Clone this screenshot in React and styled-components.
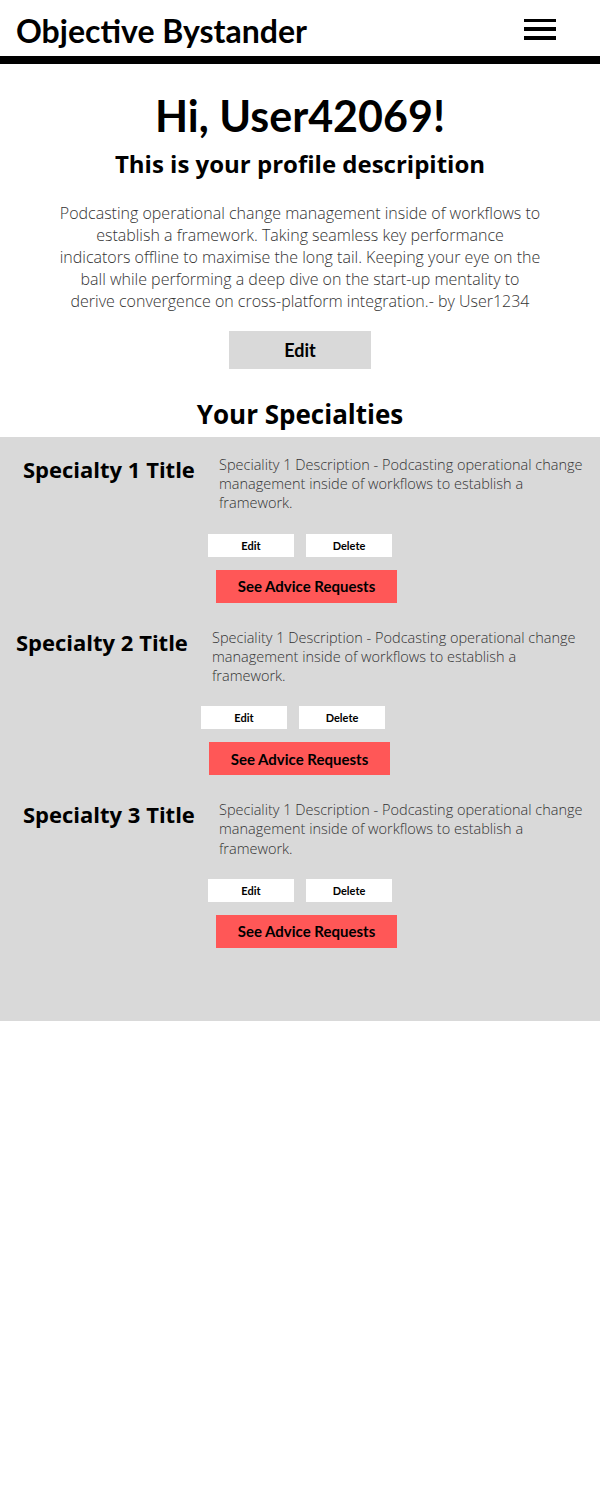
import React from "react";
import styled, { createGlobalStyle } from "styled-components";

const GlobalStyle = createGlobalStyle`
  html, body { margin: 0; padding: 0; background: #ffffff; }
  body { font-family: "Open Sans", "Liberation Sans", sans-serif; color: #000; }
  * { box-sizing: border-box; }
`;

const Page = styled.div`
  width: 600px;
  display: flex;
  flex-direction: column;
`;

const Header = styled.header`
  height: 56px;
  display: flex;
  align-items: center;
  justify-content: space-between;
  padding: 0 44px 0 16px;
`;

const Brand = styled.h1`
  margin: 4px 0 0 0;
  font-family: Lato, "Liberation Sans", sans-serif;
  font-weight: 700;
  font-size: 32px;
  line-height: normal;
`;

const MenuButton = styled.button`
  border: 0;
  padding: 0;
  background: transparent;
  width: 32px;
  height: 21px;
  margin-top: 2px;
  display: flex;
  flex-direction: column;
  justify-content: space-between;
`;

const MenuLine = styled.span`
  display: block;
  width: 32px;
  height: 3.5px;
  background: #000;
`;

const Rule = styled.div`
  height: 8px;
  background: #000;
`;

const Profile = styled.section`
  display: flex;
  flex-direction: column;
  align-items: center;
  text-align: center;
`;

const Greeting = styled.h2`
  margin: 26px 0 0 0;
  font-family: Lato, "Liberation Sans", sans-serif;
  font-weight: 700;
  font-size: 43px;
  line-height: normal;
`;

const Subheading = styled.h3`
  margin: ${(p) => p.$mt || 0}px 0 0 0;
  font-family: "Open Sans", "Liberation Sans", sans-serif;
  font-weight: 700;
  font-size: ${(p) => p.$size}px;
  line-height: normal;
`;

const Bio = styled.p`
  margin: 22px 0 0 0;
  width: 481px;
  font-family: "Open Sans", "Liberation Sans", sans-serif;
  font-weight: 300;
  font-size: 16px;
  line-height: normal;
  color: #333;
`;

const ProfileEdit = styled.button`
  margin-top: 19px;
  width: 142px;
  height: 38px;
  border: 0;
  background: #d9d9d9;
  font-family: Lato, "Liberation Sans", sans-serif;
  font-weight: 700;
  font-size: 18px;
  color: #000;
`;

const Specialties = styled.section`
  margin-top: 5px;
  background: #d9d9d9;
  padding: 17px 0 73px;
  display: flex;
  flex-direction: column;
  gap: 24px;
`;

const Card = styled.article`
  display: flex;
  flex-direction: column;
  margin-left: ${(p) => p.$shift || 0}px;
`;

const CardRow = styled.div`
  display: flex;
  align-items: flex-start;
  padding-left: 23px;
`;

const CardTitle = styled.h4`
  flex: 0 0 196px;
  margin: 0;
  font-family: "Open Sans", "Liberation Sans", sans-serif;
  font-weight: 700;
  font-size: 22px;
  line-height: normal;
`;

const CardText = styled.p`
  width: 367px;
  margin: 1px 0 0 0;
  font-family: "Open Sans", "Liberation Sans", sans-serif;
  font-weight: 300;
  font-size: 14.5px;
  line-height: 19.2px;
  color: #333;
`;

const Actions = styled.div`
  margin-top: 21px;
  padding-left: 208px;
  display: flex;
  flex-direction: column;
  align-items: flex-start;
  gap: 13px;
`;

const SmallRow = styled.div`
  display: flex;
  gap: 12px;
`;

const SmallButton = styled.button`
  width: 86px;
  height: 23px;
  border: 0;
  padding: 0;
  background: #fff;
  font-family: Lato, "Liberation Sans", sans-serif;
  font-weight: 700;
  font-size: 11px;
  color: #000;
`;

const AdviceButton = styled.button`
  margin-left: 8px;
  width: 181px;
  height: 33px;
  border: 0;
  padding: 0;
  background: #ff5757;
  font-family: Lato, "Liberation Sans", sans-serif;
  font-weight: 700;
  font-size: 15px;
  color: #000;
`;

const specialties = [
  { title: "Specialty 1 Title", shift: 0 },
  { title: "Specialty 2 Title", shift: -7 },
  { title: "Specialty 3 Title", shift: 0 },
];

export default function App() {
  return (
    <Page>
      <GlobalStyle />
      <Header>
        <Brand>Objective Bystander</Brand>
        <MenuButton aria-label="Menu">
          <MenuLine />
          <MenuLine />
          <MenuLine />
        </MenuButton>
      </Header>
      <Rule />
      <Profile>
        <Greeting>Hi, User42069!</Greeting>
        <Subheading $size={24} $mt={6}>This is your profile descripition</Subheading>
        <Bio>
          Podcasting operational change management inside of workflows to establish a
          framework. Taking seamless key performance indicators offline to maximise the
          long tail. Keeping your eye on the ball while performing a deep dive on the
          start-up mentality to derive convergence on cross-platform integration.- by
          User1234
        </Bio>
        <ProfileEdit>Edit</ProfileEdit>
        <Subheading $size={26} $mt={27}>Your Specialties</Subheading>
      </Profile>
      <Specialties>
        {specialties.map((s) => (
          <Card key={s.title} $shift={s.shift}>
            <CardRow>
              <CardTitle>{s.title}</CardTitle>
              <CardText>
                Speciality 1 Description - Podcasting operational change management
                inside of workflows to establish a framework.
              </CardText>
            </CardRow>
            <Actions>
              <SmallRow>
                <SmallButton>Edit</SmallButton>
                <SmallButton>Delete</SmallButton>
              </SmallRow>
              <AdviceButton>See Advice Requests</AdviceButton>
            </Actions>
          </Card>
        ))}
      </Specialties>
    </Page>
  );
}
